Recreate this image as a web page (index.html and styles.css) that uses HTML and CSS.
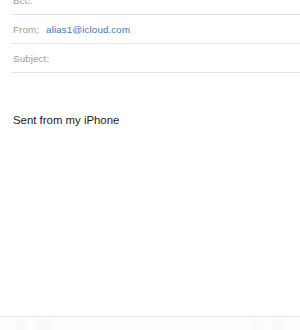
FILE: index.html
```html
<!DOCTYPE html>
<html>
<head>
<meta charset="utf-8">
<link rel="stylesheet" href="styles.css">
</head>
<body>
<div class="screen">
  <div class="fields">
    <div class="row"><span class="label">Bcc:</span></div>
    <div class="row"><span class="label">From:</span><span class="value">alias1@icloud.com</span></div>
    <div class="row"><span class="label">Subject:</span></div>
  </div>
  <div class="body">Sent from my iPhone</div>
  <div class="toolbar">
    <div class="group">
      <span class="key k1"></span>
      <span class="key k2"></span>
    </div>
    <div class="group">
      <span class="key k3"></span>
      <span class="key k4"></span>
    </div>
  </div>
</div>
</body>
</html>
```
FILE: styles.css
```css
html, body {
  margin: 0;
  padding: 0;
  background: #ffffff;
}
.screen {
  width: 300px;
  height: 330px;
  overflow: hidden;
  display: flex;
  flex-direction: column;
  font-family: "Liberation Sans", Arial, sans-serif;
}
.fields {
  margin-top: -14px;
  display: flex;
  flex-direction: column;
}
.row {
  margin-left: 12px;
  height: 28px;
  border-bottom: 1px solid #e3e3e3;
  display: flex;
  align-items: center;
  padding-left: 1px;
  font-size: 9.8px;
  letter-spacing: 0.1px;
}
.label {
  color: #9a9a9e;
}
.value {
  color: #3f78b4;
  margin-left: 7px;
}
.body {
  margin-top: 41px;
  padding-left: 13px;
  font-size: 11.4px;
  color: #1a1a1a;
  flex: 1;
}
.toolbar {
  height: 11px;
  border-top: 1px solid #e6e6e6;
  background: #fdfdfd;
  display: flex;
  justify-content: space-between;
  padding: 2px 16px 0;
}
.group {
  display: flex;
  gap: 9px;
}
.key {
  display: block;
  height: 11px;
  background: #fafafa;
}
.k1 { width: 10px; }
.k2 { width: 17px; }
.k3 { width: 6px; }
.k4 { width: 11px; }
.group + .group { gap: 16px; }
```
